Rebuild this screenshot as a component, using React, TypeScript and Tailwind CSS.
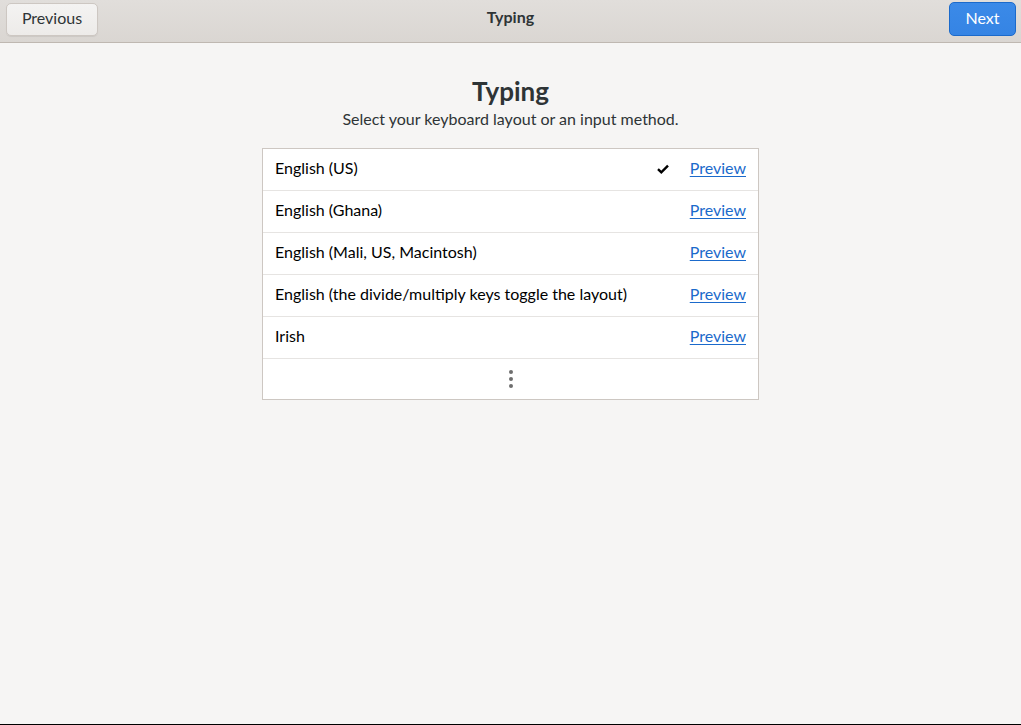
import React from "react";

const rows = [
  { name: "English (US)", checked: true },
  { name: "English (Ghana)" },
  { name: "English (Mali, US, Macintosh)" },
  { name: "English (the divide/multiply keys toggle the layout)" },
  { name: "Irish" },
];

export default function App() {
  return (
    <div
      className="w-[1021px] h-[725px] flex flex-col bg-[#f6f5f4] text-[#2e3436] border-b border-black"
      style={{ fontFamily: "Lato, 'Open Sans', sans-serif" }}
    >
      <header className="h-[43px] shrink-0 grid grid-cols-[1fr_auto_1fr] items-start pt-[2px] px-[6px] bg-gradient-to-b from-[#e1dedb] to-[#dad6d2] border-b border-[#bfb8b1]">
        <div className="flex">
          <button className="mt-[1px] h-[33px] w-[92px] pb-[3px] rounded-[5px] border border-[#cdc7c2] bg-gradient-to-b from-[#f4f3f2] to-[#edebe9] shadow-[0_1px_1px_rgba(0,0,0,0.07)] text-[16px] text-[#2e3436]">
            Previous
          </button>
        </div>
        <div className="h-[33px] pb-[4px] flex items-center text-[16px] font-bold text-[#2e3436]">Typing</div>
        <div className="flex justify-end">
          <button className="h-[34px] w-[67px] pb-[3px] mr-[-1px] rounded-[5px] border border-[#1b6acb] bg-gradient-to-b from-[#3b8ae8] to-[#3584e4] text-[16px] text-white">
            Next
          </button>
        </div>
      </header>
      <main className="flex flex-col items-center pt-[32px]">
        <h1 className="text-[26px] leading-[32px] font-bold text-[#2e3436]">Typing</h1>
        <p className="text-[16px] leading-[20px] mt-[2px] text-[#2e3436]">
          Select your keyboard layout or an input method.
        </p>
        <div className="mt-[19px] w-[497px] bg-white border border-[#cdc7c2]">
          {rows.map((r) => (
            <div
              key={r.name}
              className="h-[42px] pb-[4px] flex items-center pl-[12px] pr-[12px] border-b border-[#e6e4e2] text-[16px]"
            >
              <span className="flex-1 text-[#000]">{r.name}</span>
              {r.checked && (
                <svg width="12" height="10" viewBox="0 0 12 10" className="mr-[21px] mt-[3px]">
                  <path d="M1 5.2 L4.3 8.3 L11 1.6" stroke="#000" strokeWidth="2.4" fill="none" strokeLinejoin="miter" />
                </svg>
              )}
              <a className="text-[#1b6acb] underline underline-offset-[2px] cursor-pointer">Preview</a>
            </div>
          ))}
          <div className="h-[40px] flex items-center justify-center">
            <div className="flex flex-col gap-[3px]">
              <span className="w-[4px] h-[4px] rounded-full bg-[#6e6e6e]" />
              <span className="w-[4px] h-[4px] rounded-full bg-[#6e6e6e]" />
              <span className="w-[4px] h-[4px] rounded-full bg-[#6e6e6e]" />
            </div>
          </div>
        </div>
      </main>
    </div>
  );
}
